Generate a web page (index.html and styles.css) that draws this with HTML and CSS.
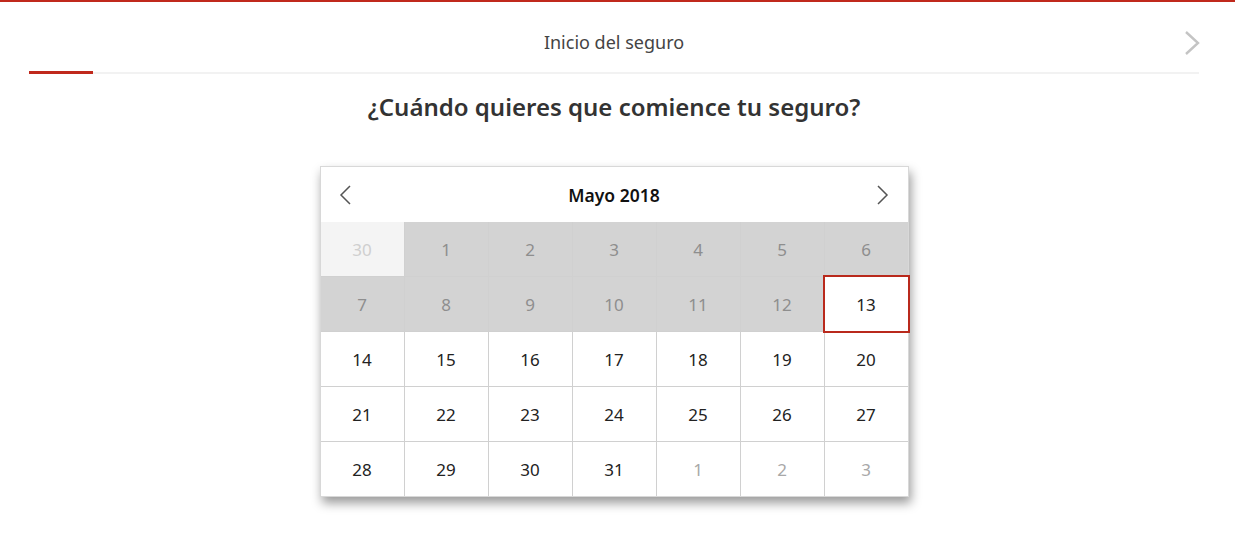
FILE: index.html
```html
<!DOCTYPE html>
<html lang="es">
<head>
<meta charset="utf-8">
<title>Inicio del seguro</title>
<link rel="stylesheet" href="styles.css">
</head>
<body>
<div class="page">
  <header class="steps">
    <div class="steps-row">
      <span></span>
      <span class="step-title">Inicio del seguro</span>
      <span class="step-next">
        <svg width="18" height="26" viewBox="0 0 18 26"><polyline points="3,2 15,13 3,24" fill="none" stroke="#c4c4c4" stroke-width="2.4"/></svg>
      </span>
    </div>
    <div class="track"><div class="track-fill"></div></div>
  </header>
  <h1 class="question">¿Cuándo quieres que comience tu seguro?</h1>
  <div class="calendar">
    <div class="cal-head">
      <span class="cal-nav">
        <svg width="14" height="22" viewBox="0 0 14 22"><polyline points="12,2 3,11 12,20" fill="none" stroke="#555" stroke-width="1.5"/></svg>
      </span>
      <span class="cal-month">Mayo 2018</span>
      <span class="cal-nav">
        <svg width="14" height="22" viewBox="0 0 14 22"><polyline points="2,2 11,11 2,20" fill="none" stroke="#555" stroke-width="1.5"/></svg>
      </span>
    </div>
    <div class="cal-grid">
      <div class="day prev">30</div>
      <div class="day off">1</div>
      <div class="day off">2</div>
      <div class="day off">3</div>
      <div class="day off">4</div>
      <div class="day off">5</div>
      <div class="day off">6</div>
      <div class="day off">7</div>
      <div class="day off">8</div>
      <div class="day off">9</div>
      <div class="day off">10</div>
      <div class="day off">11</div>
      <div class="day off">12</div>
      <div class="day selected">13</div>
      <div class="day">14</div>
      <div class="day">15</div>
      <div class="day">16</div>
      <div class="day">17</div>
      <div class="day">18</div>
      <div class="day">19</div>
      <div class="day">20</div>
      <div class="day">21</div>
      <div class="day">22</div>
      <div class="day">23</div>
      <div class="day">24</div>
      <div class="day">25</div>
      <div class="day">26</div>
      <div class="day">27</div>
      <div class="day">28</div>
      <div class="day">29</div>
      <div class="day">30</div>
      <div class="day">31</div>
      <div class="day next">1</div>
      <div class="day next">2</div>
      <div class="day next">3</div>
    </div>
  </div>
</div>
</body>
</html>
```
FILE: styles.css
```css
html, body {
  margin: 0;
  padding: 0;
  background: #fff;
}
body {
  font-family: "Noto Sans", "Open Sans", sans-serif;
  color: #222;
  border-top: 2px solid #c0291c;
}
.page {
  padding: 0 36px 40px 29px;
}
.steps-row {
  display: grid;
  grid-template-columns: 1fr auto 1fr;
  align-items: center;
  height: 70px;
}
.step-title {
  font-size: 18px;
  color: #444;
  position: relative;
  top: 5px;
}
.step-next {
  justify-self: end;
  display: flex;
  margin-right: -2px;
  position: relative;
  top: 6px;
}
.track {
  height: 2px;
  background: #f2f2f2;
  position: relative;
}
.track-fill {
  position: absolute;
  left: 0;
  top: -1px;
  width: 64px;
  height: 3px;
  background: #c0291c;
}
.question {
  margin: 16px 0 0;
  text-align: center;
  font-size: 24px;
  line-height: 34px;
  font-weight: 600;
  color: #333;
}
.calendar {
  width: 587px;
  margin: 42px auto 0;
  border: 1px solid #d8d8d8;
  background: #fff;
  box-shadow: 2px 6px 10px rgba(0, 0, 0, 0.4);
}
.cal-head {
  height: 55px;
  display: flex;
  align-items: center;
  justify-content: space-between;
  padding: 0 17px 0 17px;
}
.cal-nav {
  display: flex;
}
.cal-month {
  font-size: 17.5px;
  font-weight: 600;
  color: #111;
  position: relative;
  top: 0;
}
.cal-grid {
  display: grid;
  grid-template-columns: repeat(7, 83px);
  grid-auto-rows: 54px;
  gap: 1px;
  background: #d0d0d0;
}
.day {
  display: flex;
  align-items: center;
  justify-content: center;
  background: #fff;
  font-size: 17px;
  color: #222;
}
.day.off {
  background: #d3d3d3;
  color: #8e8e8e;
}
.day.prev {
  background: #f4f4f4;
  color: #cfcfcf;
}
.day.next {
  color: #a8a8a8;
}
.day.selected {
  position: relative;
  z-index: 1;
  outline: 2px solid #b9291c;
}
```
